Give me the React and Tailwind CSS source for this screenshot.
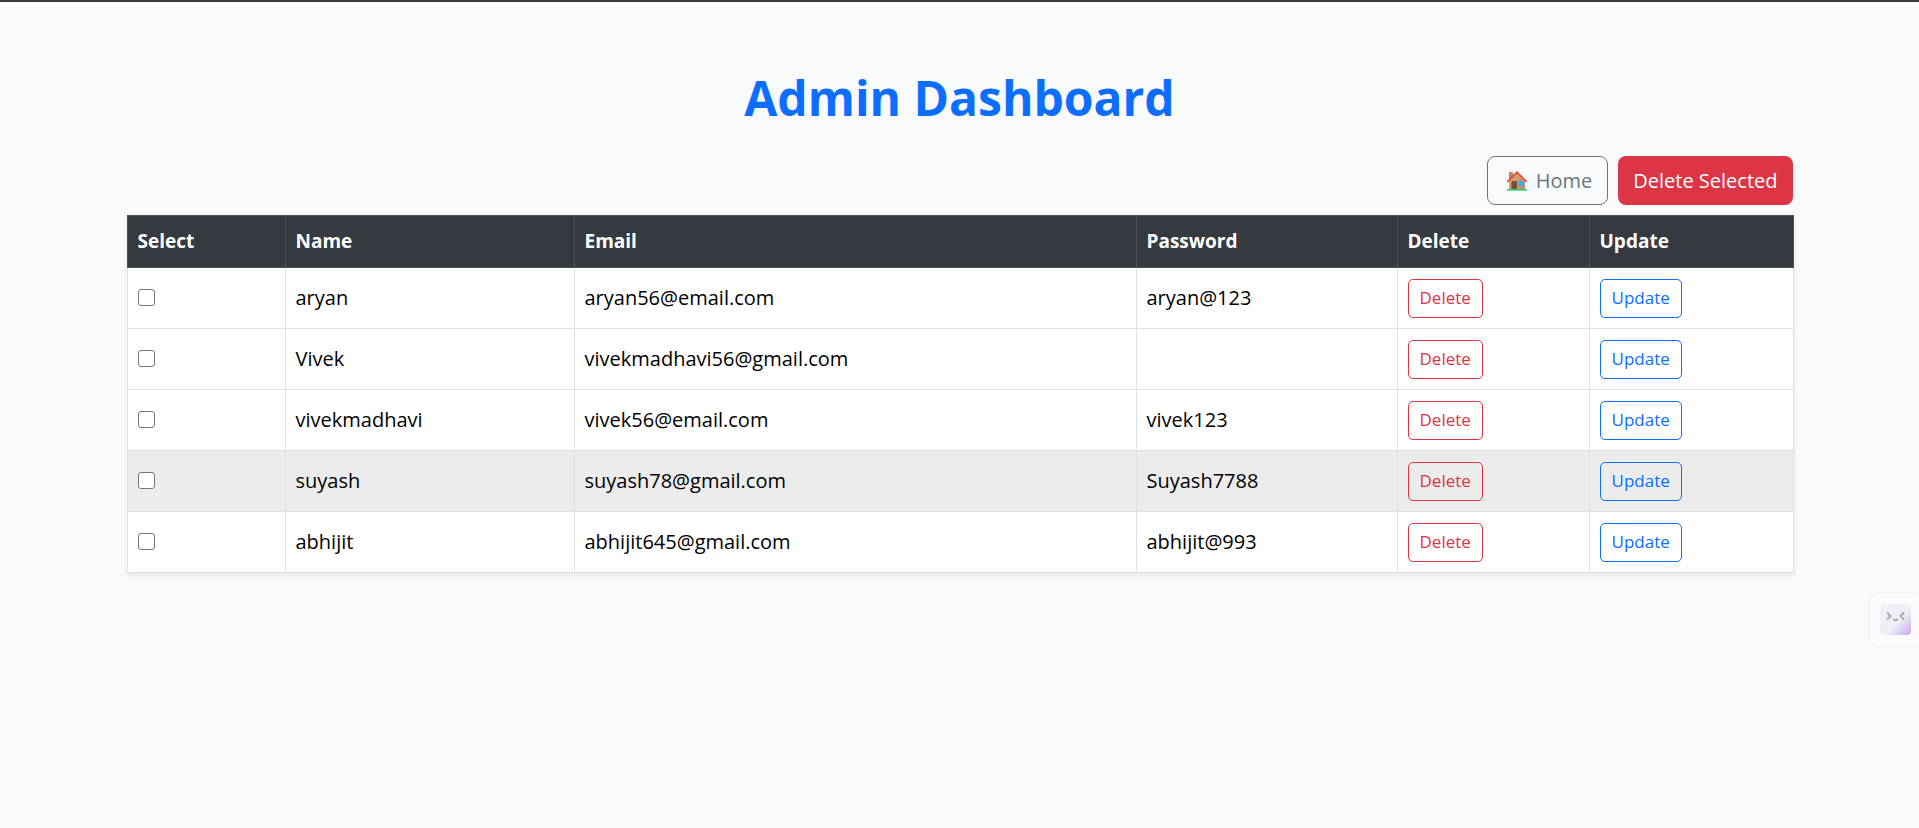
const users = [
  { name: 'aryan', email: 'aryan56@email.com', password: 'aryan@123' },
  { name: 'Vivek', email: 'vivekmadhavi56@gmail.com', password: '' },
  { name: 'vivekmadhavi', email: 'vivek56@email.com', password: 'vivek123' },
  { name: 'suyash', email: 'suyash78@gmail.com', password: 'Suyash7788', active: true },
  { name: 'abhijit', email: 'abhijit645@gmail.com', password: 'abhijit@993' },
];

const columns = [
  { label: 'Select', width: 'w-[158px]' },
  { label: 'Name', width: 'w-[289px]' },
  { label: 'Email', width: 'w-[562px]' },
  { label: 'Password', width: 'w-[261px]' },
  { label: 'Delete', width: 'w-[192px]' },
  { label: 'Update', width: 'w-[204px]' },
];

function HouseIcon() {
  return (
    <svg viewBox="0 0 22 22" className="h-[22px] w-[22px]" aria-hidden="true">
      <defs>
        <linearGradient id="wall" x1="0" y1="0" x2="1" y2="1">
          <stop offset="0" stopColor="#e0a878" />
          <stop offset="1" stopColor="#c08a5c" />
        </linearGradient>
      </defs>
      <rect x="3" y="2" width="4" height="8" fill="#b98a62" />
      <path d="M3 11 11 3l8 8v8.500H3z" fill="url(#wall)" />
      <path d="M1.300 11.800 11 2.300l9.700 9.500" fill="none" stroke="#e24a35" strokeWidth="1.700" />
      <rect x="5.500" y="11" width="5.500" height="8.500" fill="#7a4d40" />
      <rect x="12.500" y="11" width="5" height="5" fill="#35aef0" />
      <rect x="1" y="19" width="20" height="1.800" rx=".6" fill="#3ccb74" />
    </svg>
  );
}

function FaceIcon() {
  return (
    <svg viewBox="0 0 31 31" className="h-[31px] w-[31px]" aria-hidden="true">
      <defs>
        <linearGradient id="face" x1="0" y1="0" x2="1" y2="1">
          <stop offset="0" stopColor="#eef1f6" />
          <stop offset=".58" stopColor="#edeef6" />
          <stop offset="1" stopColor="#cda6ee" />
        </linearGradient>
      </defs>
      <rect width="31" height="31" rx="4" fill="url(#face)" />
      <g fill="none" stroke="#a2a4aa" strokeWidth="1.800">
        <path d="M7 8.500 10.500 12 7 15.700M24 8.500 20.500 12l3.500 3.700M13.300 14.800c.5 2 3.900 2 4.400 0" />
      </g>
    </svg>
  );
}

export default function App() {
  return (
    <div className="min-h-screen border-t-2 border-[#3b3b40] bg-[#f8fafc] font-['Open_Sans','Noto_Sans',sans-serif] text-black">
      <main className="mx-auto max-w-[1666px] pt-[60px]">
        <h1 className="text-center text-[48px] leading-[72px] font-bold text-[#0d6efd]">Admin Dashboard</h1>
        <div className="mt-[22px] mb-2.5 flex justify-end gap-2.5">
          <a
            href="#home"
            className="flex h-[49px] items-center gap-2 rounded-lg border border-[#6c757d] pr-[15px] pl-[18px] text-[20px] text-[#6c757d]"
          >
            <HouseIcon />
            Home
          </a>
          <button type="button" className="h-[49px] rounded-lg bg-[#dc3545] px-[15px] text-[20px] text-white">
            Delete Selected
          </button>
        </div>
        <table className="w-full table-fixed border-collapse bg-white text-left text-[20px] shadow-[0_3px_5px_rgba(0,0,0,0.08)]">
          <thead className="bg-[#343a40] text-[19px] text-white">
            <tr className="h-[52px]">
              {columns.map((c) => (
                <th key={c.label} scope="col" className={`${c.width} border border-[#4d5154] px-2.5 font-bold`}>
                  {c.label}
                </th>
              ))}
            </tr>
          </thead>
          <tbody>
            {users.map((u) => (
              <tr key={u.email} className={u.active ? 'h-[61px] bg-[#ececec]' : 'h-[61px]'}>
                <td className="border border-[#dee2e6] px-2.5">
                  <input
                    type="checkbox"
                    aria-label={`Select ${u.name}`}
                    className="mb-0.5 block h-[17px] w-[17px] appearance-none rounded-[3px] border border-[#767676] bg-white checked:bg-[#0d6efd]"
                  />
                </td>
                <td className="border border-[#dee2e6] px-2.5">{u.name}</td>
                <td className="border border-[#dee2e6] px-2.5">{u.email}</td>
                <td className="border border-[#dee2e6] px-2.5">{u.password}</td>
                <td className="border border-[#dee2e6] px-2.5">
                  <button
                    type="button"
                    className="block h-[39px] rounded-[5px] border border-[#dc3545] px-[11px] text-[17px] text-[#dc3545]"
                  >
                    Delete
                  </button>
                </td>
                <td className="border border-[#dee2e6] px-2.5">
                  <button
                    type="button"
                    className="block h-[39px] rounded-[5px] border border-[#0d6efd] px-[11px] text-[17px] text-[#0d6efd]"
                  >
                    Update
                  </button>
                </td>
              </tr>
            ))}
          </tbody>
        </table>
      </main>
      <button
        type="button"
        aria-label="Open assistant"
        className="fixed top-[594px] right-0 flex h-[51px] items-center rounded-l-lg bg-[#fafbfd] pr-2 pl-2.5 shadow-[0_0_6px_rgba(0,0,0,0.06)]"
      >
        <FaceIcon />
      </button>
    </div>
  );
}
